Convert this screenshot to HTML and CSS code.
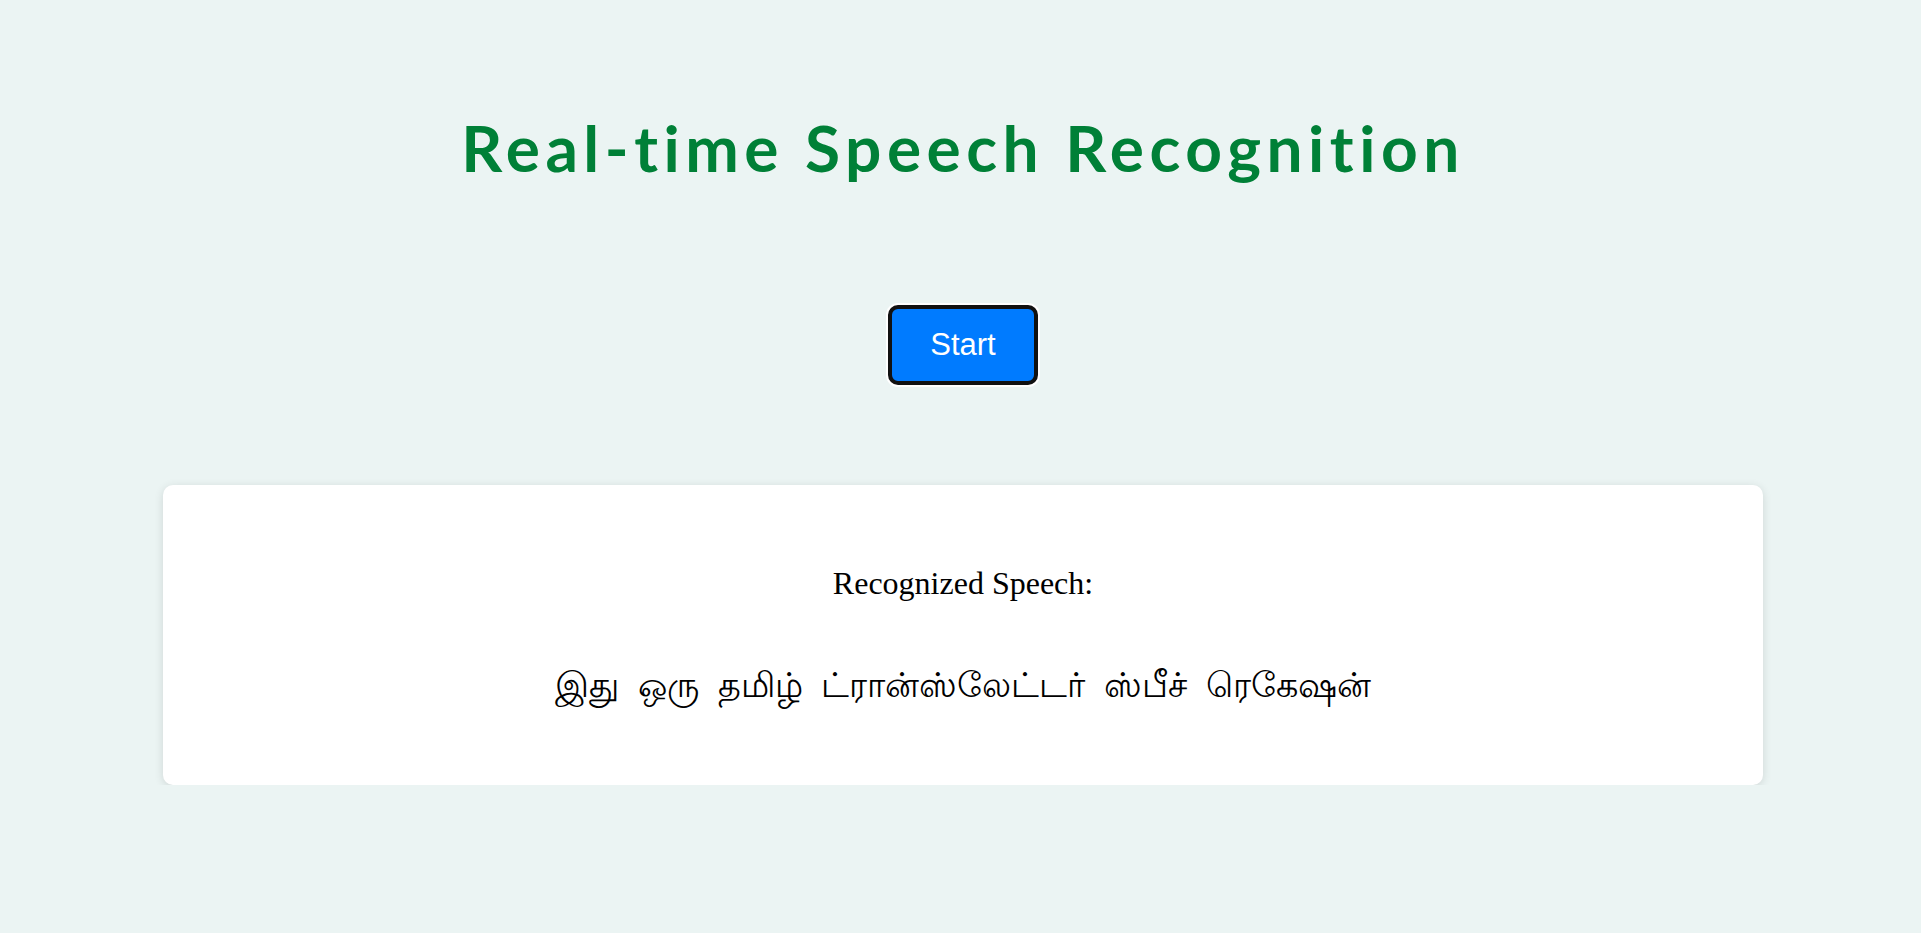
FILE: index.html
```html
<!DOCTYPE html>
<html lang="en">
<head>
<meta charset="utf-8">
<title>Real-time Speech Recognition</title>
<link rel="stylesheet" href="styles.css">
</head>
<body>
<main class="page">
  <h1 class="title">Real-time Speech Recognition</h1>
  <div class="controls">
    <button class="start-btn" type="button">Start</button>
  </div>
  <section class="result-card">
    <h2 class="result-label">Recognized Speech:</h2>
    <p class="result-text">இது ஒரு தமிழ் ட்ரான்ஸ்லேட்டர் ஸ்பீச் ரெகேஷன்</p>
  </section>
</main>
</body>
</html>
```

FILE: styles.css
```css
html, body {
  margin: 0;
  padding: 0;
}

body {
  background: #ebf4f3;
  font-family: "Liberation Serif", "Times New Roman", serif;
  color: #000;
}

.page {
  display: flex;
  flex-direction: column;
  align-items: center;
  padding-top: 110px;
  padding-left: 5px;
}

.title {
  margin: 0;
  font-family: Lato, "Open Sans", sans-serif;
  font-weight: 700;
  font-size: 64px;
  line-height: 1.2;
  letter-spacing: 5.5px;
  color: #008037;
  text-align: center;
}

.controls {
  margin-top: 118px;
  display: flex;
  justify-content: center;
}

.start-btn {
  font-family: "Liberation Sans", Arial, sans-serif;
  font-size: 31px;
  line-height: 36px;
  color: #fff;
  background: #007bff;
  border: 4px solid #111;
  border-radius: 10px;
  padding: 18px 38px;
  box-shadow: 0 0 0 2px #fff;
  cursor: pointer;
}

.result-card {
  margin-top: 100px;
  width: 1600px;
  box-sizing: border-box;
  background: #fff;
  border-radius: 10px;
  box-shadow: 0 2px 10px rgba(0, 0, 0, 0.12);
  padding: 80px 40px 77px;
  text-align: center;
}

.result-label {
  margin: 0;
  font-family: "Liberation Serif", "Times New Roman", serif;
  font-weight: 400;
  font-size: 32px;
  line-height: 37px;
}

.result-text {
  margin: 62px 0 0;
  font-size: 35px;
  line-height: 44px;
  word-spacing: 10px;
}
```
